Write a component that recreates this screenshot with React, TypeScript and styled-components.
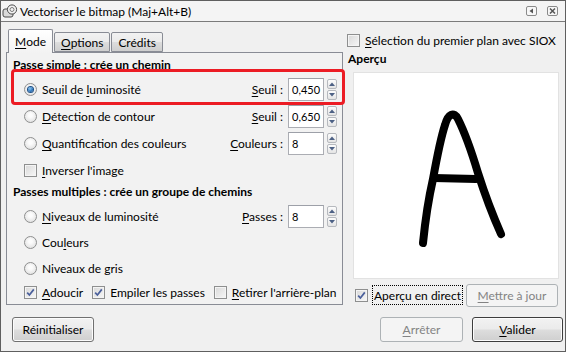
import React from "react";
import styled, { createGlobalStyle } from "styled-components";

const GlobalStyle = createGlobalStyle`
    html, body {
        margin: 0;
        padding: 0;
        background: #f0f0f0;
    }
    body {
        font-family: Lato, "Liberation Sans", sans-serif;
        font-size: 12px;
        color: #000;
    }
`;

const Window = styled.div`
    width: 566px;
    height: 352px;
    box-sizing: border-box;
    border: 1px solid #5f5f5f;
    background: #f0f0f0;
    display: flex;
    flex-direction: column;
`;

const TitleBar = styled.div`
    height: 20px;
    flex: none;
    display: flex;
    align-items: center;
    padding: 0 7px 0 1px;
    background: #f4f4f4;
    border-bottom: 1px solid #7b7b7b;
`;

const Title = styled.span`
    margin-left: 2px;
    flex: 1;
`;

const TitleButtons = styled.div`
    display: flex;
    gap: 10px;
    align-items: center;
`;

const Content = styled.div`
    display: flex;
    padding: 7px 2px 0 5px;
`;

const Notebook = styled.div`
    width: 337px;
    flex: none;
    display: flex;
    flex-direction: column;
`;

const TabStrip = styled.div`
    height: 23px;
    display: flex;
    align-items: flex-end;
    padding-left: 2px;
    position: relative;
    z-index: 1;
`;

const Tab = styled.div<{ $active?: boolean }>`
    box-sizing: border-box;
    height: ${(p) => (p.$active ? "24px" : "20px")};
    margin-bottom: ${(p) => (p.$active ? "-1px" : "0")};
    padding: 0 6px;
    margin-right: 1px;
    display: flex;
    align-items: center;
    border: 1px solid #898c95;
    border-bottom: ${(p) => (p.$active ? "none" : "1px solid #898c95")};
    border-radius: 2px 2px 0 0;
    background: ${(p) =>
        p.$active
            ? "linear-gradient(#ffffff, #f2f2f2)"
            : "linear-gradient(#f2f2f2 0%, #ebebeb 50%, #dddddd 51%, #cfcfcf 100%)"};
    padding-top: ${(p) => (p.$active ? "0" : "1px")};
`;

const Panel = styled.div`
    height: 253px;
    box-sizing: border-box;
    border: 1px solid #898c95;
    background: #f2f2f2;
    padding-top: 3px;
    display: flex;
    flex-direction: column;
`;

const Header = styled.div<{ $h: number }>`
    height: ${(p) => p.$h}px;
    font-weight: bold;
    padding-left: 6px;
    display: flex;
    align-items: flex-start;
    line-height: 18px;
    flex: none;
`;

const Row = styled.div<{ $h: number; $mark?: boolean }>`
    height: ${(p) => p.$h}px;
    flex: none;
    display: flex;
    align-items: center;
    padding: 0 5px 0 17px;
    gap: 9px;
    position: relative;

    &::after {
        content: "";
        display: ${(p) => (p.$mark ? "block" : "none")};
        position: absolute;
        top: -7px;
        bottom: -2px;
        left: 4px;
        right: -3px;
        border: 3px solid #ec1c24;
        border-radius: 4px;
        pointer-events: none;
    }
`;

const Choice = styled.label`
    display: flex;
    align-items: center;
    gap: 5px;
    white-space: nowrap;
`;

const Spacer = styled.div`
    flex: 1;
`;

const Field = styled.div`
    display: flex;
    align-items: center;
    flex: none;
`;

const FieldLabel = styled.span`
    margin-right: 5px;
    white-space: nowrap;
`;

const Entry = styled.div`
    width: 36px;
    height: 23px;
    flex: none;
    box-sizing: border-box;
    border: 1px solid #abadb3;
    border-top-color: #9da0a8;
    background: #fff;
    padding-left: 3px;
    font-size: 11px;
    display: flex;
    align-items: center;
    white-space: nowrap;
`;

const Spin = styled.div`
    display: flex;
    flex-direction: column;
    gap: 1px;
    margin-left: 3px;
`;

const SpinButton = styled.span`
    width: 10px;
    height: 10px;
    box-sizing: border-box;
    border: 1px solid #b6b9be;
    border-radius: 2px;
    background: linear-gradient(#fdfdfd, #e4e4e4);
    display: flex;
    align-items: center;
    justify-content: center;
`;

const RadioMark = styled.span<{ $on?: boolean }>`
    width: 13px;
    height: 13px;
    box-sizing: border-box;
    border-radius: 50%;
    border: 1px solid #8e8f8f;
    background: radial-gradient(circle at 50% 40%, #fcfcfc 20%, #d9d9d9 100%);
    display: inline-flex;
    align-items: center;
    justify-content: center;
    flex: none;

    &::after {
        content: "";
        width: 5px;
        height: 5px;
        border-radius: 50%;
        background: ${(p) =>
            p.$on ? "radial-gradient(circle at 40% 35%, #8ccaf5 0%, #2a71b8 60%, #1a4f8a 100%)" : "transparent"};
        box-shadow: ${(p) => (p.$on ? "0 0 0 1px #1c4f86" : "none")};
    }
`;

const CheckMark = styled.span`
    width: 13px;
    height: 13px;
    box-sizing: border-box;
    border: 1px solid #8e8f8f;
    background: linear-gradient(135deg, #d8d8d8, #f7f7f7);
    box-shadow: inset 0 0 0 1px #f4f4f4;
    display: inline-flex;
    align-items: center;
    justify-content: center;
    flex: none;
`;

const U = styled.span`
    text-decoration: underline;
    text-underline-offset: 2px;
`;

const Side = styled.div`
    flex: 1;
    margin-left: 3px;
    display: flex;
    flex-direction: column;
`;

const SideRow = styled.div<{ $pad: number }>`
    height: 22px;
    display: flex;
    align-items: center;
    padding-left: ${(p) => p.$pad}px;
`;

const SideHeader = styled.div`
    height: 16px;
    line-height: 16px;
    font-weight: bold;
    padding-left: 2px;
`;

const Preview = styled.div`
    margin: 5px 0 0 7px;
    width: 206px;
    height: 207px;
    box-sizing: border-box;
    border: 1px solid #e2e2e2;
    background: #fff;
    display: flex;
`;

const LiveRow = styled.div`
    margin-top: 5px;
    height: 22px;
    display: flex;
    align-items: center;
    padding-left: 9px;
`;

const Focus = styled.span`
    margin: 0 3px 0 4px;
    height: 20px;
    box-sizing: border-box;
    border: 1px dotted #000;
    padding: 0 1px;
    display: flex;
    align-items: center;
`;

const BottomBar = styled.div`
    margin-top: 11px;
    display: flex;
    align-items: center;
    padding: 0 2px 0 11px;
    gap: 9px;
`;

const Button = styled.div<{ $w: number; $h?: number; $disabled?: boolean; $default?: boolean }>`
    width: ${(p) => p.$w}px;
    height: ${(p) => p.$h ?? 25}px;
    box-sizing: border-box;
    border-radius: 3px;
    border: 1px solid ${(p) => (p.$disabled ? "#adb2b5" : p.$default ? "#3d3d3d" : "#707070")};
    background: ${(p) =>
        p.$disabled
            ? "#f4f4f4"
            : "linear-gradient(#f2f2f2 0%, #ebebeb 48%, #dddddd 52%, #cfcfcf 100%)"};
    box-shadow: ${(p) => (p.$disabled ? "none" : "inset 0 0 0 1px #fcfcfc")};
    color: ${(p) => (p.$disabled ? "#838383" : "#000")};
    display: flex;
    align-items: center;
    justify-content: center;
    flex: none;
`;

function Arrow({ up }: { up?: boolean }): JSX.Element {
    return (
        <svg width="6" height="4" viewBox="0 0 6 4">
            <path d={up ? "M0 4 L3 0.5 L6 4 Z" : "M0 0 L3 3.5 L6 0 Z"} fill="#4d6185" />
        </svg>
    );
}

function Radio({ on }: { on?: boolean }): JSX.Element {
    return <RadioMark $on={on} />;
}

function Check({ on }: { on?: boolean }): JSX.Element {
    return (
        <CheckMark>
            {on && (
                <svg width="9" height="9" viewBox="0 0 9 9">
                    <path d="M1.2 4.6 L3.4 7 L7.8 1.4" fill="none" stroke="#4a5f9b" strokeWidth="1.7" />
                </svg>
            )}
        </CheckMark>
    );
}

interface SpinFieldProps {
    label: React.ReactNode;
    value: string;
}

function SpinField({ label, value }: SpinFieldProps): JSX.Element {
    return (
        <Field>
            <FieldLabel>{label}</FieldLabel>
            <Entry>{value}</Entry>
            <Spin>
                <SpinButton>
                    <Arrow up />
                </SpinButton>
                <SpinButton>
                    <Arrow />
                </SpinButton>
            </Spin>
        </Field>
    );
}

function TitleIcon(): JSX.Element {
    return (
        <svg width="16" height="16" viewBox="0 0 16 16">
            <rect x="1" y="6" width="10" height="8" rx="2" fill="#d9d9d9" stroke="#4a4a4a" />
            <circle cx="10" cy="6.5" r="4.6" fill="#f2f2f2" stroke="#4a4a4a" />
            <circle cx="10" cy="6.5" r="2" fill="none" stroke="#7a7a7a" />
        </svg>
    );
}

function WinButton({ kind }: { kind: "back" | "close" }): JSX.Element {
    return (
        <svg width="11" height="10" viewBox="0 0 11 10">
            <rect x="0.5" y="0.5" width="10" height="9" rx="1.5" fill="#f7f7f7" stroke="#8a8a8a" />
            {kind === "back" ? (
                <path d="M3.5 5 L7 2.5 L7 7.5 Z" fill="#555" />
            ) : (
                <path d="M3 2.5 L8 7.5 M8 2.5 L3 7.5" stroke="#555" strokeWidth="1.5" />
            )}
        </svg>
    );
}

function PreviewLetter(): JSX.Element {
    return (
        <svg width="204" height="205" viewBox="0 0 204 205">
            <path
                d="M69 170 C71 150 74 128 79 106 C83 84 87 64 91 52 C94 41 100 38 104 46 C112 62 118 80 124 100 C131 122 139 143 147 161"
                fill="none"
                stroke="#000"
                strokeWidth="8"
                strokeLinecap="round"
                strokeLinejoin="round"
            />
            <path d="M80 105 L122 106" stroke="#000" strokeWidth="8" strokeLinecap="round" />
        </svg>
    );
}

export default function App(): JSX.Element {
    return (
        <>
            <GlobalStyle />
            <Window>
                <TitleBar>
                    <TitleIcon />
                    <Title>Vectoriser le bitmap (Maj+Alt+B)</Title>
                    <TitleButtons>
                        <WinButton kind="back" />
                        <WinButton kind="close" />
                    </TitleButtons>
                </TitleBar>
                <Content>
                    <Notebook>
                        <TabStrip>
                            <Tab $active>
                                <U>M</U>ode
                            </Tab>
                            <Tab>
                                <U>O</U>ptions
                            </Tab>
                            <Tab>Crédits</Tab>
                        </TabStrip>
                        <Panel>
                            <Header $h={20}>Passe simple : crée un chemin</Header>
                            <Row $h={27} $mark>
                                <Choice>
                                    <Radio on />
                                    <span>
                                        Seuil de <U>l</U>uminosité
                                    </span>
                                </Choice>
                                <Spacer />
                                <SpinField
                                    label={
                                        <>
                                            <U>S</U>euil :
                                        </>
                                    }
                                    value="0,450"
                                />
                            </Row>
                            <Row $h={27}>
                                <Choice>
                                    <Radio />
                                    <span>
                                        <U>D</U>étection de contour
                                    </span>
                                </Choice>
                                <Spacer />
                                <SpinField
                                    label={
                                        <>
                                            <U>S</U>euil :
                                        </>
                                    }
                                    value="0,650"
                                />
                            </Row>
                            <Row $h={27}>
                                <Choice>
                                    <Radio />
                                    <span>
                                        <U>Q</U>uantification des couleurs
                                    </span>
                                </Choice>
                                <Spacer />
                                <SpinField
                                    label={
                                        <>
                                            <U>C</U>ouleurs :
                                        </>
                                    }
                                    value="8"
                                />
                            </Row>
                            <Row $h={26}>
                                <Choice>
                                    <Check />
                                    <span>
                                        <U>I</U>nverser l'image
                                    </span>
                                </Choice>
                            </Row>
                            <Header $h={20}>Passes multiples : crée un groupe de chemins</Header>
                            <Row $h={26}>
                                <Choice>
                                    <Radio />
                                    <span>
                                        <U>N</U>iveaux de luminosité
                                    </span>
                                </Choice>
                                <Spacer />
                                <SpinField
                                    label={
                                        <>
                                            <U>P</U>asses :
                                        </>
                                    }
                                    value="8"
                                />
                            </Row>
                            <Row $h={26}>
                                <Choice>
                                    <Radio />
                                    <span>
                                        Cou<U>l</U>eurs
                                    </span>
                                </Choice>
                            </Row>
                            <Row $h={26}>
                                <Choice>
                                    <Radio />
                                    <span>Niveaux de gris</span>
                                </Choice>
                            </Row>
                            <Row $h={23}>
                                <Choice>
                                    <Check on />
                                    <span>
                                        <U>A</U>doucir
                                    </span>
                                </Choice>
                                <Choice>
                                    <Check on />
                                    <span>Empiler les passes</span>
                                </Choice>
                                <Choice>
                                    <Check />
                                    <span>
                                        <U>R</U>etirer l'arrière-plan
                                    </span>
                                </Choice>
                            </Row>
                        </Panel>
                    </Notebook>
                    <Side>
                        <SideRow $pad={1}>
                            <Choice>
                                <Check />
                                <span>
                                    <U>S</U>élection du premier plan avec SIOX
                                </span>
                            </Choice>
                        </SideRow>
                        <SideHeader>Aperçu</SideHeader>
                        <Preview>
                            <PreviewLetter />
                        </Preview>
                        <LiveRow>
                            <Check on />
                            <Focus>Aperçu en direct</Focus>
                            <Button $w={92} $h={23} $disabled>
                                <span>
                                    <U>M</U>ettre à jour
                                </span>
                            </Button>
                        </LiveRow>
                    </Side>
                </Content>
                <BottomBar>
                    <Button $w={82}>Réinitialiser</Button>
                    <Spacer />
                    <Button $w={83} $disabled>
                        <span>
                            <U>A</U>rrêter
                        </span>
                    </Button>
                    <Button $w={91} $default>
                        <span>
                            <U>V</U>alider
                        </span>
                    </Button>
                </BottomBar>
            </Window>
        </>
    );
}
